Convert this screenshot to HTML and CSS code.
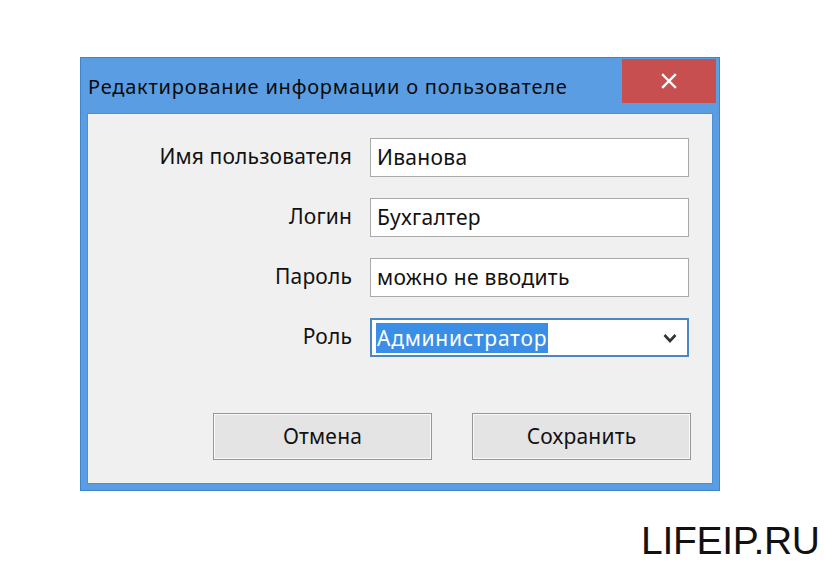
FILE: index.html
```html
<!DOCTYPE html>
<html lang="ru">
<head>
<meta charset="utf-8">
<link rel="stylesheet" href="styles.css">
</head>
<body>
<div class="window">
  <div class="titlebar">
    <span class="title">Редактирование информации о пользователе</span>
    <div class="close">
      <svg width="16" height="16" viewBox="0 0 16 16"><path d="M2 2 L14 14 M14 2 L2 14" stroke="#fff" stroke-width="2.4" stroke-linecap="square"/></svg>
    </div>
  </div>
  <div class="client">
    <div class="form">
      <label class="label">Имя пользователя</label>
      <div class="field">Иванова</div>
      <label class="label">Логин</label>
      <div class="field">Бухгалтер</div>
      <label class="label">Пароль</label>
      <div class="field">можно не вводить</div>
      <label class="label">Роль</label>
      <div class="field combo"><span class="sel">Администратор</span>
        <svg class="chev" width="14" height="10" viewBox="0 0 14 10"><path d="M1.5 2 L7 8 L12.5 2" fill="none" stroke="#333" stroke-width="2.6"/></svg>
      </div>
    </div>
    <div class="buttons">
      <div class="btn">Отмена</div>
      <div class="btn">Сохранить</div>
    </div>
  </div>
</div>
<div class="brand">LIFEIP.RU</div>
</body>
</html>
```
FILE: styles.css
```css
html, body {
  margin: 0;
  padding: 0;
  background: #ffffff;
  width: 824px;
  height: 566px;
  overflow: hidden;
  font-family: "Noto Sans", "Open Sans", sans-serif;
}
.window {
  box-sizing: border-box;
  margin: 57px 0 0 80px;
  width: 640px;
  height: 434px;
  background: #5b9de2;
  border: 1px solid #3d84cf;
  padding: 0 6px 6px 6px;
  display: flex;
  flex-direction: column;
}
.titlebar {
  height: 55px;
  display: flex;
  align-items: flex-start;
  justify-content: space-between;
}
.title {
  margin-top: 15px;
  margin-left: 1px;
  font-size: 20px;
  color: #0a0a0a;
  letter-spacing: 0.78px;
}
.close {
  width: 94px;
  height: 44px;
  margin-top: 1px;
  margin-right: -3px;
  background: #c84f4f;
  display: flex;
  align-items: center;
  justify-content: center;
}
.client {
  flex: 1;
  background: #f0f0f0;
  border: 1px solid #4c8fd6;
}
.form {
  display: grid;
  grid-template-columns: 264px 319px;
  column-gap: 18px;
  row-gap: 21px;
  padding-top: 24px;
  align-items: center;
}
.label {
  text-align: right;
  font-size: 21px;
  letter-spacing: 0.15px;
  color: #111;
  margin-top: -4px;
}
.field {
  box-sizing: border-box;
  height: 39px;
  background: #ffffff;
  border: 1px solid #a9a9a9;
  font-size: 21px;
  letter-spacing: 0.3px;
  color: #111;
  padding-left: 6px;
  line-height: 37px;
}
.combo {
  border-color: #4c86c4;
  border-width: 2px;
  line-height: 35px;
  padding-left: 4px;
  display: flex;
  align-items: center;
  justify-content: space-between;
  padding-right: 10px;
}
.sel {
  background: #3a8ee6;
  color: #ffffff;
  line-height: 30px;
  padding: 0 1px;
  letter-spacing: 0.75px;
}
.chev {
  display: block;
}
.buttons {
  display: flex;
  gap: 40px;
  padding-left: 125px;
  margin-top: 56px;
}
.btn {
  box-sizing: border-box;
  width: 219px;
  height: 47px;
  border: 1px solid #979797;
  box-shadow: inset 0 0 0 1px #f8f8f8;
  background: #e4e4e4;
  font-size: 21px;
  letter-spacing: 0.2px;
  color: #111;
  display: flex;
  align-items: center;
  justify-content: center;
  padding-bottom: 1px;
}
.brand {
  position: absolute;
  left: 641px;
  top: 519px;
  font-family: "Liberation Sans", Arial, sans-serif;
  font-size: 39px;
  letter-spacing: -0.3px;
  color: #111;
}
```
